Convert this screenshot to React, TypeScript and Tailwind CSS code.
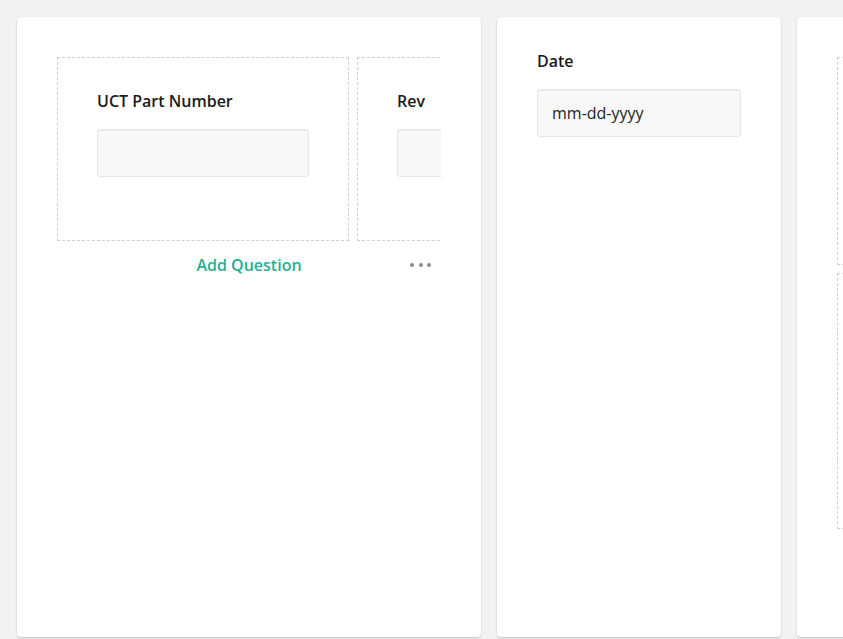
import React from "react";

const font = { fontFamily: '"Open Sans", "Noto Sans", sans-serif' };

function Input({ className = "", children }: { className?: string; children?: React.ReactNode }) {
  return (
    <div
      className={`h-12 rounded-[3px] border border-[#e6e6e6] bg-[#f8f8f8] shadow-[inset_0_1px_1px_rgba(0,0,0,0.05)] flex items-center px-[14px] text-base text-[#222] ${className}`}
    >
      {children}
    </div>
  );
}

export default function App() {
  return (
    <div style={font} className="w-[843px] h-[639px] overflow-hidden bg-[#f2f2f2] flex gap-4 pl-[17px] pt-[17px]">
      {/* Card 1 */}
      <div className="shrink-0 w-[464px] h-[620px] bg-white rounded-[4px] shadow-[0_1px_2px_rgba(0,0,0,0.2)] p-10">
        <div className="w-[384px] overflow-hidden">
          <div className="flex gap-2 w-max">
            <div className="w-[292px] h-[184px] border border-dashed border-[#cfcfcf] pl-[39px] pt-[31px]">
              <div className="text-base font-semibold text-[#1a1a1a] leading-6 mb-4">UCT Part Number</div>
              <Input className="w-[212px]" />
            </div>
            <div className="w-[292px] h-[184px] border border-dashed border-[#cfcfcf] pl-[39px] pt-[31px]">
              <div className="text-base font-semibold text-[#1a1a1a] leading-6 mb-4">Rev</div>
              <Input className="w-[212px]" />
            </div>
          </div>
          <div className="relative mt-3 h-6 flex items-center justify-center">
            <span className="text-base font-semibold text-[#22b196] leading-6">Add Question</span>
            <div className="absolute right-[10px] top-1/2 -translate-y-1/2 flex gap-[4.5px]">
              <span className="w-1 h-1 rounded-full bg-[#8a8a8a]" />
              <span className="w-1 h-1 rounded-full bg-[#8a8a8a]" />
              <span className="w-1 h-1 rounded-full bg-[#8a8a8a]" />
            </div>
          </div>
        </div>
      </div>

      {/* Card 2 */}
      <div className="shrink-0 w-[284px] h-[620px] bg-white rounded-[4px] shadow-[0_1px_2px_rgba(0,0,0,0.2)] px-10 pt-8">
        <div className="text-base font-semibold text-[#1a1a1a] leading-6 mb-4">Date</div>
        <Input className="w-[204px]">mm-dd-yyyy</Input>
      </div>

      {/* Card 3 */}
      <div className="shrink-0 w-[284px] h-[620px] bg-white rounded-[4px] shadow-[0_1px_2px_rgba(0,0,0,0.2)] pl-10 pt-10">
        <div className="flex flex-col gap-2">
          <div className="w-[244px] h-[208px] border border-dashed border-[#cfcfcf]" />
          <div className="w-[244px] h-[256px] border border-dashed border-[#cfcfcf]" />
        </div>
      </div>
    </div>
  );
}
